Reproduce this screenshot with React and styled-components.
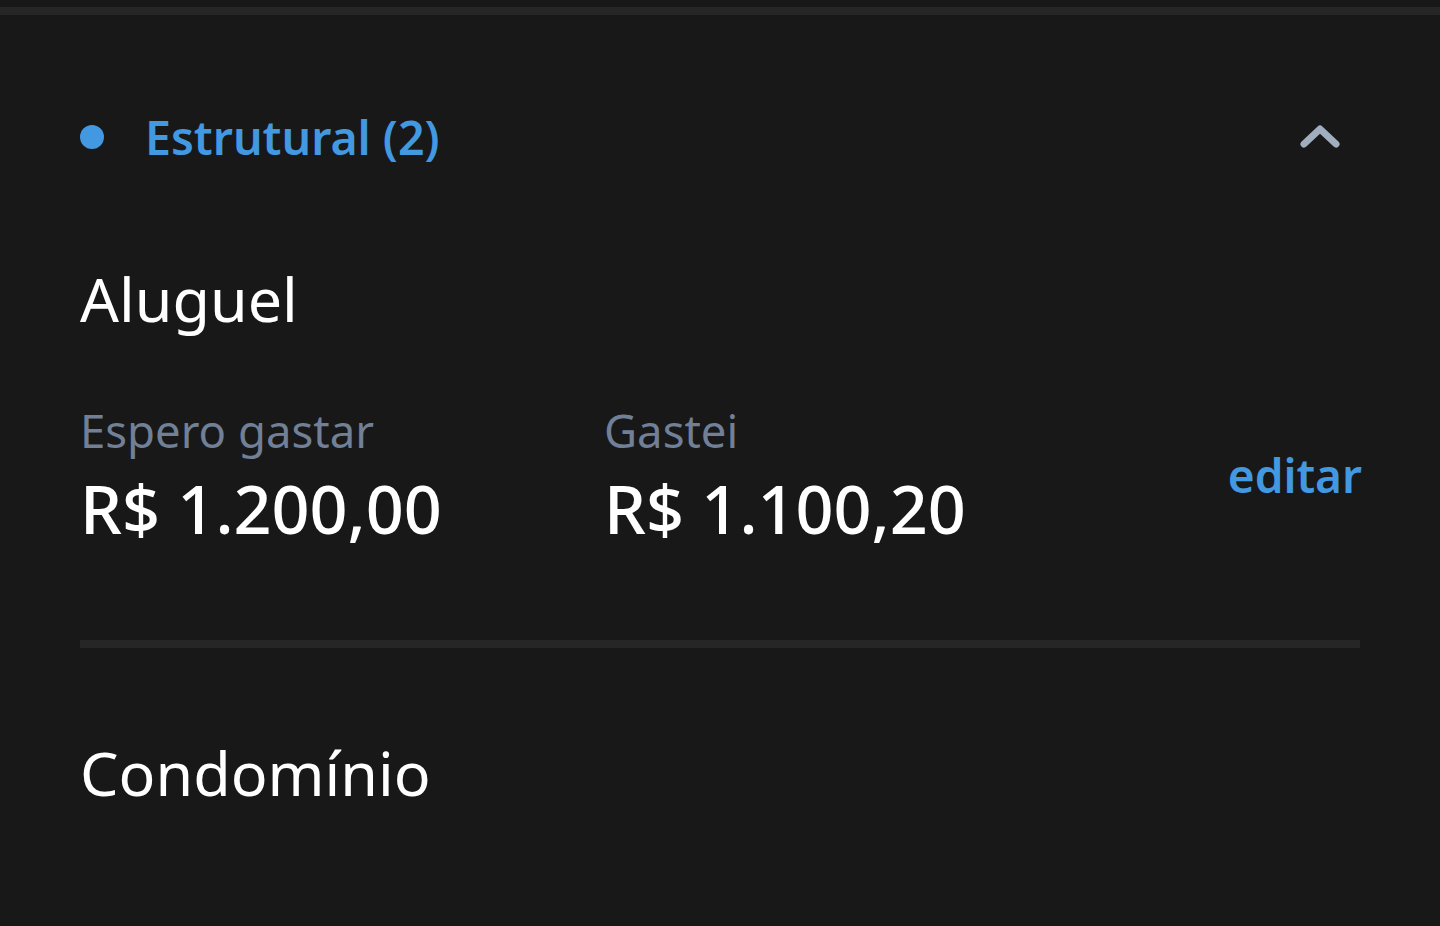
import React from 'react';
import styled, { createGlobalStyle } from 'styled-components';

const GlobalStyle = createGlobalStyle`
	html, body {
		margin: 0;
		background: #181818;
		font-family: 'Noto Sans', 'Open Sans', sans-serif;
	}
`;

const Page = styled.div`
	width: 1440px;
	height: 926px;
	overflow: hidden;
	background: #181818;
	padding-top: 7px;
	box-sizing: border-box;
`;

const TopRule = styled.div`
	height: 8px;
	background: #262626;
`;

const Section = styled.section`
	padding: 0 80px;
`;

const GroupHeader = styled.div`
	display: flex;
	align-items: center;
	justify-content: space-between;
	height: 90px;
	margin-top: 77px;
`;

const GroupTitle = styled.div`
	display: flex;
	align-items: center;
	gap: 41px;
	color: #4299e1;
	font-size: 46.5px;
	font-weight: 600;
`;

const Dot = styled.span`
	width: 24px;
	height: 24px;
	border-radius: 50%;
	background: #4299e1;
`;

const Chevron = styled.svg`
	width: 44px;
	height: 30px;
	margin-right: 18px;
`;

const Item = styled.div`
	padding-top: ${(p) => p.$top}px;
	border-bottom: ${(p) => (p.$divider ? '8px solid #262626' : 'none')};
	padding-bottom: ${(p) => p.$bottom}px;
`;

const ItemName = styled.div`
	color: #ffffff;
	font-size: 61px;
	font-weight: 400;
	line-height: 1;
`;

const Values = styled.div`
	display: grid;
	grid-template-columns: 524px 1fr auto;
	align-items: center;
	margin-top: 76px;
`;

const Value = styled.div`
	display: flex;
	flex-direction: column;
	gap: 17px;
`;

const Label = styled.span`
	color: #718096;
	font-size: 45.5px;
	line-height: 1.1;
`;

const Amount = styled.span`
	color: #ffffff;
	font-size: 66.5px;
	font-weight: 500;
	line-height: 1.1;
`;

const EditLink = styled.a`
	color: #4299e1;
	font-size: 46px;
	font-weight: 600;
	text-decoration: none;
	cursor: pointer;
	margin-right: -2px;
`;

export default function App() {
	return (
		<>
			<GlobalStyle />
			<Page>
				<TopRule />
				<Section>
					<GroupHeader>
						<GroupTitle>
							<Dot />
							Estrutural (2)
						</GroupTitle>
						<Chevron viewBox="0 0 44 30">
							<path
								d="M6 22 L22 7 L38 22"
								fill="none"
								stroke="#a0aec0"
								strokeWidth="7"
								strokeLinecap="round"
								strokeLinejoin="round"
							/>
						</Chevron>
					</GroupHeader>
					<Item $top={86} $bottom={95} $divider>
						<ItemName>Aluguel</ItemName>
						<Values>
							<Value>
								<Label>Espero gastar</Label>
								<Amount>R$ 1.200,00</Amount>
							</Value>
							<Value>
								<Label>Gastei</Label>
								<Amount>R$ 1.100,20</Amount>
							</Value>
							<EditLink>editar</EditLink>
						</Values>
					</Item>
					<Item $top={94} $bottom={0}>
						<ItemName>Condomínio</ItemName>
					</Item>
				</Section>
			</Page>
		</>
	);
}
